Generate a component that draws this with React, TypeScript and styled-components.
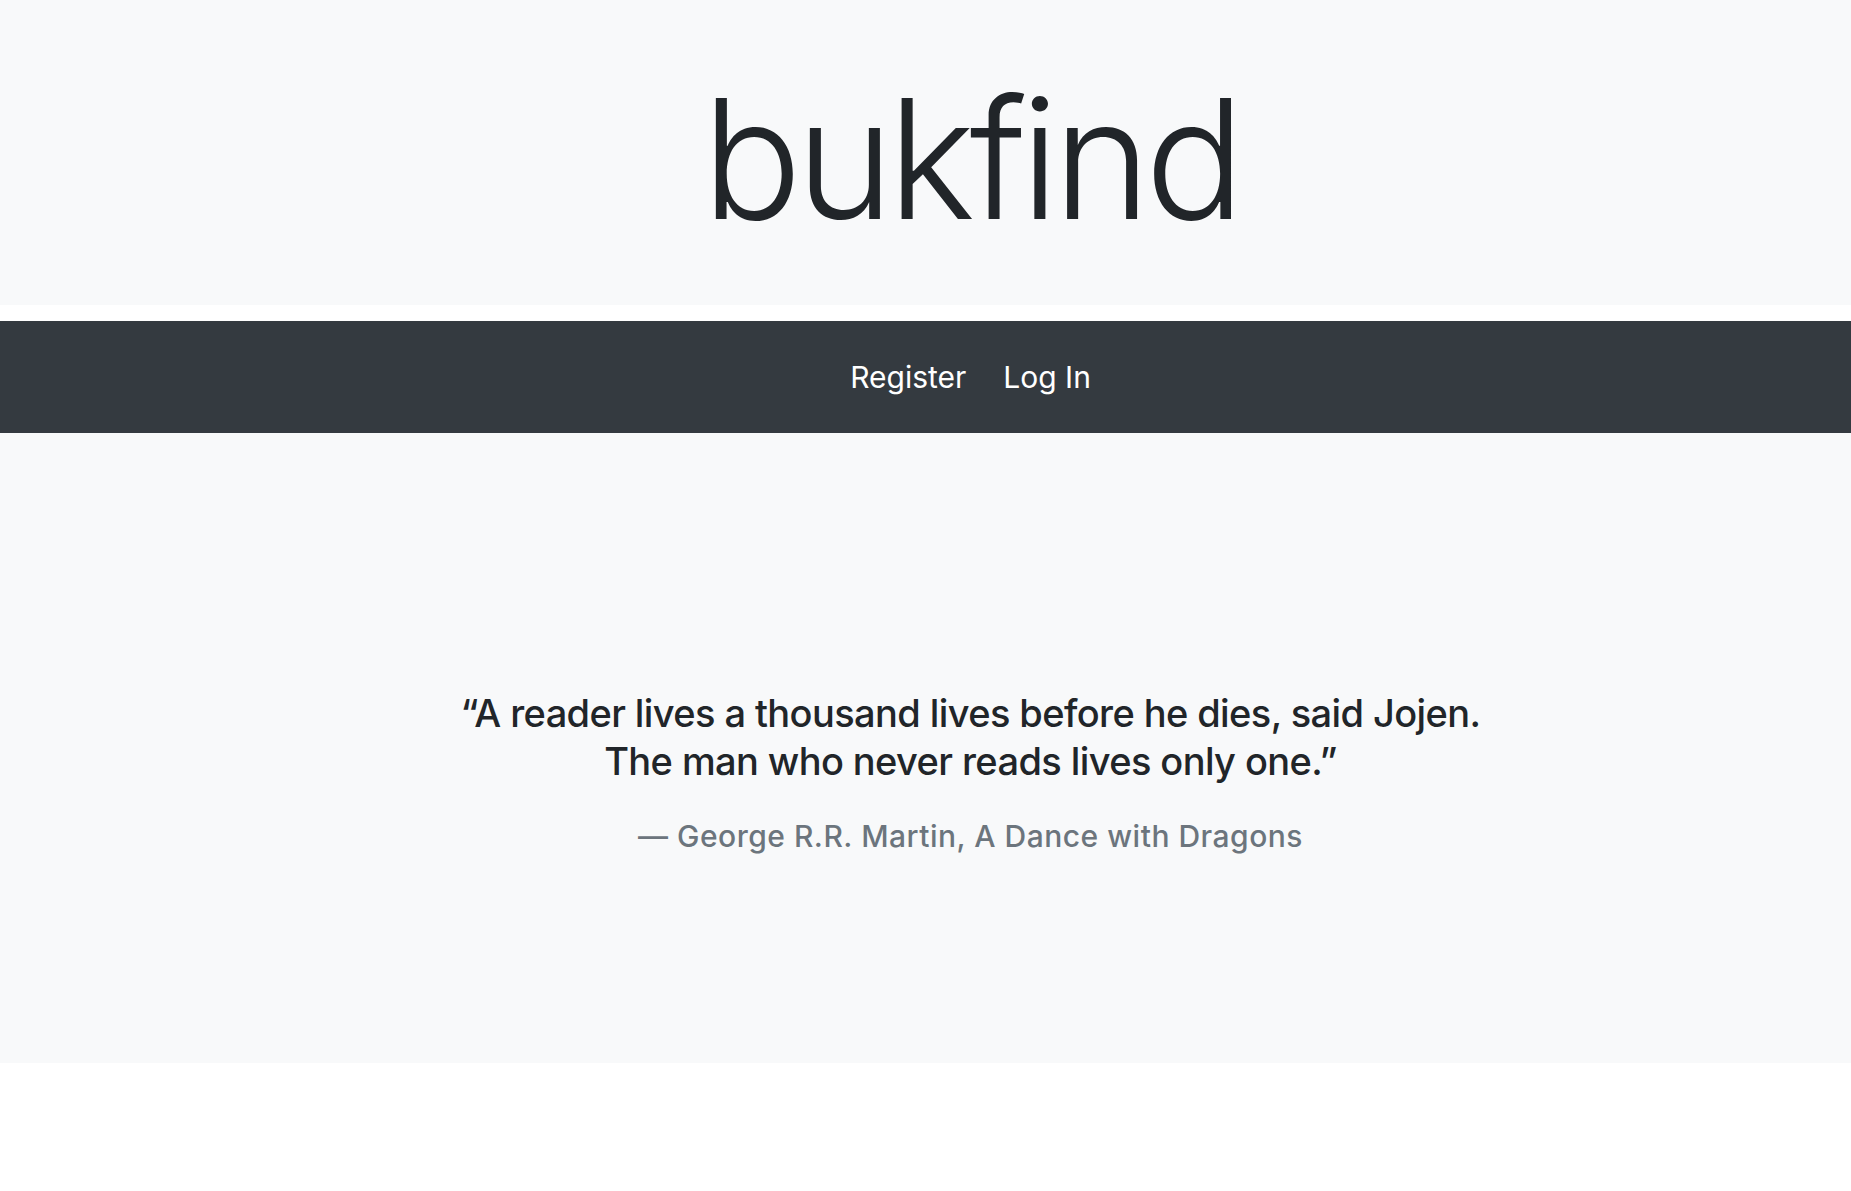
import React from "react";
import styled, { createGlobalStyle } from "styled-components";

const GlobalStyle = createGlobalStyle`
  html, body {
    margin: 0;
    padding: 0;
    background: #ffffff;
  }
  body {
    font-family: Inter, "Noto Sans", "Liberation Sans", sans-serif;
    color: #212529;
  }
`;

const Page = styled.div`
  display: flex;
  flex-direction: column;
  gap: 16px;
  width: 100%;
`;

const Header = styled.header`
  height: 305px;
  background: #f8f9fa;
  display: flex;
  align-items: center;
  justify-content: center;
  padding: 13px 0 0 90px;
  box-sizing: border-box;
`;

const Logo = styled.h1`
  margin: 0;
  font-family: Inter, "Noto Sans", sans-serif;
  font-weight: 300;
  font-size: 166px;
  line-height: 1;
  letter-spacing: -6px;
  color: #212529;
`;

const Stack = styled.div`
  display: flex;
  flex-direction: column;
`;

const NavBar = styled.nav`
  height: 112px;
  background: #343a40;
  display: flex;
  align-items: center;
  justify-content: center;
  gap: 37px;
  padding-left: 90px;
  box-sizing: border-box;
`;

const NavLink = styled.a`
  color: #ffffff;
  font-size: 30px;
  font-weight: 400;
  text-decoration: none;
  cursor: pointer;
`;

const Main = styled.main`
  height: 630px;
  background: #f8f9fa;
  display: flex;
  flex-direction: column;
  align-items: center;
  justify-content: center;
  padding: 48px 0 0 90px;
  box-sizing: border-box;
`;

const Quote = styled.blockquote`
  margin: 0;
  text-align: center;
`;

const QuoteText = styled.p`
  margin: 0 0 31px;
  font-size: 38px;
  font-weight: 500;
  line-height: 48px;
  color: #212529;
  letter-spacing: -0.6px;
`;

const Attribution = styled.footer`
  font-size: 30px;
  font-weight: 500;
  line-height: 40px;
  color: #6c757d;
  letter-spacing: 0.5px;
`;

export default function App() {
  return (
    <>
      <GlobalStyle />
      <Page>
        <Header>
          <Logo>bukfind</Logo>
        </Header>
        <Stack>
          <NavBar>
            <NavLink>Register</NavLink>
            <NavLink>Log In</NavLink>
          </NavBar>
          <Main>
            <Quote>
              <QuoteText>
                “A reader lives a thousand lives before he dies, said Jojen.
                <br />
                The man who never reads lives only one.”
              </QuoteText>
              <Attribution>— George R.R. Martin, A Dance with Dragons</Attribution>
            </Quote>
          </Main>
        </Stack>
      </Page>
    </>
  );
}
